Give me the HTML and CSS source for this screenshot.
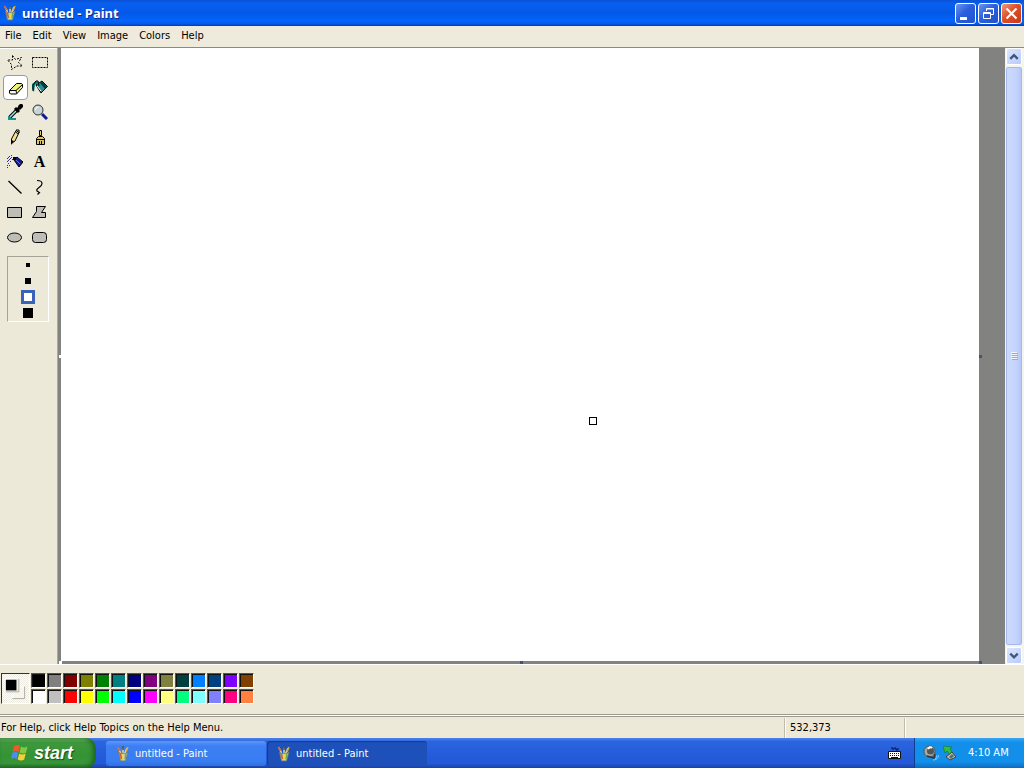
FILE: index.html
```html
<!DOCTYPE html>
<html lang="en">
<head>
<meta charset="utf-8">
<title>untitled - Paint</title>
<link rel="stylesheet" href="styles.css">
</head>
<body>
<svg class="defs" width="0" height="0" aria-hidden="true">
  <symbol id="paint" viewBox="0 0 16 16">
    <path d="M4 3l2 6M8 2v7M12 2l-3 7" stroke="#e8d8a0" stroke-width="1.500"/>
    <path d="M2.500 1l2 4" stroke="#c07050" stroke-width="2"/>
    <path d="M8 0v4" stroke="#405068" stroke-width="1.500"/>
    <path d="M13 1l-2 5" stroke="#e0a830" stroke-width="1.500"/>
    <path d="M3.500 6l2 9h5l2.500-9-3 2-2-1-2 1z" fill="#b4c8a4" stroke="#6c7c62" stroke-width=".8"/>
    <path d="M5 7l1.500 6" stroke="#d86030" stroke-width="1.500"/>
    <path d="M8.200 8v6" stroke="#e8d850" stroke-width="2"/>
    <path d="M11 8l-1 5" stroke="#58a850" stroke-width="1"/>
  </symbol>
</svg>
<header class="titlebar">
  <svg class="app-icon" aria-hidden="true"><use href="#paint"/></svg>
  <h1 class="title">untitled - Paint</h1>
  <div class="window-buttons">
    <button class="win-btn" aria-label="Minimize"><svg viewBox="0 0 19 19"><path d="M4 13h7v3H4z" fill="#fff"/></svg></button>
    <button class="win-btn" aria-label="Restore"><svg viewBox="0 0 19 19" fill="none" stroke="#fff"><path d="M7.500 7V4.500h7v6H12M7 5h8"/><path d="M4.500 8.500h7v6h-7zM4 9.500h8"/></svg></button>
    <button class="win-btn close" aria-label="Close"><svg viewBox="0 0 19 19"><path d="M4.500 4.500l10 10M14.500 4.500l-10 10" stroke="#fff" stroke-width="2.200"/></svg></button>
  </div>
</header>
<nav class="menubar">
  <button class="menu">File</button><button class="menu">Edit</button><button class="menu">View</button><button class="menu">Image</button><button class="menu">Colors</button><button class="menu">Help</button>
</nav>
<main class="workspace">
  <aside class="toolbox">
    <div class="tools">
      <button class="tool" aria-label="Free-form select"><svg viewBox="0 0 16 16"><path d="M5.500 1.500l3 4 6-2-3 5 4 3.500-5.500 0-5.500 3.500 0-5-4-4.500h5z" fill="none" stroke="#000" stroke-dasharray="2 1.300"/></svg></button>
      <button class="tool" aria-label="Select"><svg viewBox="0 0 16 16"><path d="M.5 3.500h15v10H.5z" fill="none" stroke="#000" stroke-dasharray="2 1"/></svg></button>
      <button class="tool selected" aria-label="Eraser" aria-pressed="true"><svg viewBox="0 0 16 16" stroke="#000"><path d="M1.500 10.500l7-7h5l1 1v3l-6 6.500h-6l-1-1z" fill="#eef080"/><path d="M1.500 10.500H8l6.500-6M8 10.500l.5 3" fill="none"/><path d="M2.500 11.500h5v1.500h-5z" fill="#fff" stroke="none"/></svg></button>
      <button class="tool" aria-label="Fill with color"><svg viewBox="0 0 16 16"><path d="M0 5l4-3 3 1-4 3-1 7-2-3z" fill="#087878"/><path d="M4 6l6-4 5.500 5.500L9 14z" fill="#28908e" stroke="#000"/><path d="M8 4l5 6 2-2-5-6z" fill="#083840"/><path d="M5 7l4 5" stroke="#fff" fill="none"/><path d="M1 12V6l3-4h2l1 5" stroke="#000" fill="none"/></svg></button>
      <button class="tool" aria-label="Pick color"><svg viewBox="0 0 16 16"><path d="M1 15h8M1 13h4" stroke="#169090" stroke-width="2"/><path d="M3 13l7-7" stroke="#000" stroke-width="3.500"/><path d="M3 13l6-6" stroke="#a5e5e2" stroke-width="1.500"/><path d="M8 4l4 4M10 6l3-3" stroke="#000" stroke-width="3"/><path d="M11 2l2-2h2l1 1v2l-3 3z"/></svg></button>
      <button class="tool" aria-label="Magnifier"><svg viewBox="0 0 16 16"><path d="M10 10l5 5" stroke="#15159a" stroke-width="3"/><circle cx="6" cy="6" r="5" fill="#c8d3d5" stroke="#333"/><path d="M3.500 6q0-3 3-3" stroke="#fff" fill="none"/></svg></button>
      <button class="tool" aria-label="Pencil"><svg viewBox="0 0 16 16"><path d="M4.500 14.500v-4.500l4.500-8.500 3 2-4 8.500z" fill="#f5dd91" stroke="#000"/><path d="M8.500 3l3 2M9 1h3v3" stroke="#000" fill="none"/><path d="M4 11l3 1-3 4z"/></svg></button>
      <button class="tool" aria-label="Brush"><svg viewBox="0 0 16 16"><path d="M7.500 1.500h2v5h-2z" fill="#e8d85a" stroke="#000"/><path d="M4.500 9.500l2-2h4l2 2v6h-8z" fill="#d8c668" stroke="#000"/><path d="M4 10.500h9M7.500 12v3M9.500 12v3" fill="none" stroke="#000"/></svg></button>
      <button class="tool" aria-label="Airbrush"><svg viewBox="0 0 16 16"><path d="M7 6l3-3 6 5-4 5z" fill="#101a9a" stroke="#000"/><path d="M6 3h3v3H6z"/><path d="M0 4h1v1H0zM2 2h1v1H2zM4 3h1v1H4zM2 5h1v1H2zM0 7h1v1H0zM4 1h1v1H4zM1 9h1v1H1zM3 7h1v1H3zM0 11h1v1H0zM2 11h1v1H2zM0 13h1v1H0zM5 5h1v1H5zM1 3h1v1H1zM3 4h1v1H3zM1 6h1v1H1z" fill="#2828bd"/><path d="M9 6l4 4" stroke="#7070dc"/></svg></button>
      <button class="tool letter" aria-label="Text">A</button>
      <button class="tool" aria-label="Line"><svg viewBox="0 0 16 16"><path d="M1.500 2l13 12.500" stroke="#000" stroke-width="1.300"/></svg></button>
      <button class="tool" aria-label="Curve"><svg viewBox="0 0 16 16"><path d="M5 1.500q5 0 5 3 0 2-3 4-3 2-2 3.500l2.500 1.500-2 2" fill="none" stroke="#000" stroke-width="1.200"/></svg></button>
      <button class="tool" aria-label="Rectangle"><svg viewBox="0 0 16 16"><path d="M.5 3.500h14v10H.5z" fill="#bebdb8" stroke="#000"/></svg></button>
      <button class="tool" aria-label="Polygon"><svg viewBox="0 0 16 16"><path d="M4.500 2.500h9l-4 6h4v5H.5l4-6z" fill="#bebdb8" stroke="#000"/></svg></button>
      <button class="tool" aria-label="Ellipse"><svg viewBox="0 0 16 16"><ellipse cx="7.500" cy="8.500" rx="7" ry="4.500" fill="#bebdb8" stroke="#000"/></svg></button>
      <button class="tool" aria-label="Rounded rectangle"><svg viewBox="0 0 16 16"><rect x=".5" y="3.500" width="14" height="10" rx="3" fill="#bebdb8" stroke="#000"/></svg></button>
    </div>
    <div class="sizes">
      <button class="size" aria-label="4 pixels"><svg viewBox="0 0 14 14"><path d="M5 5h4v4H5z"/></svg></button>
      <button class="size" aria-label="6 pixels"><svg viewBox="0 0 14 14"><path d="M4 4h6v6H4z"/></svg></button>
      <button class="size picked" aria-label="8 pixels" aria-pressed="true"><svg viewBox="0 0 14 14"><path d="M3 3h8v8H3z" fill="#fff"/></svg></button>
      <button class="size" aria-label="10 pixels"><svg viewBox="0 0 14 14"><path d="M2 2h10v10H2z"/></svg></button>
    </div>
  </aside>
  <section class="view">
    <div class="canvas">
      <span class="handle left"></span><span class="handle right"></span><span class="handle bottom"></span><span class="handle corner"></span><span class="handle start-corner"></span>
      <span class="eraser-cursor"></span>
    </div>
  </section>
  <div class="scrollbar">
    <button class="arrow" aria-label="Scroll up"><svg viewBox="0 0 15 15"><path d="M3.500 10l4-4 4 4" fill="none" stroke="#40567c" stroke-width="2.500"/></svg></button>
    <button class="thumb" aria-label="Scroll position"><svg viewBox="0 0 7 8"><path d="M0 .5h6M0 2.500h6M0 4.500h6M0 6.500h6" stroke="#f0f5ff"/><path d="M1 1.500h6M1 3.500h6M1 5.500h6M1 7.500h6" stroke="#93a9e3"/></svg></button>
    <button class="arrow" aria-label="Scroll down"><svg viewBox="0 0 15 15"><path d="M3.500 5.500l4 4 4-4" fill="none" stroke="#40567c" stroke-width="2.500"/></svg></button>
  </div>
</main>
<section class="palette">
  <div class="current"><svg viewBox="0 0 28 30"><path d="M11.500 13.500h12v12h-12z" fill="#f6f4ee" stroke="#fff"/><path d="M11 25.500h12.500V13" fill="none" stroke="#aaa89b"/><path d="M3.500 4.500h14v14h-14z" fill="#eeece2" stroke="#fff"/><path d="M4 18.500h13.500V5" fill="none" stroke="#aaa89b"/><path d="M4 6h11v11H4z"/></svg></div>
  <div class="swatches">
    <button class="swatch c0" aria-label="Black"></button><button class="swatch c1" aria-label="Gray"></button><button class="swatch c2" aria-label="Maroon"></button><button class="swatch c3" aria-label="Olive"></button><button class="swatch c4" aria-label="Green"></button><button class="swatch c5" aria-label="Teal"></button><button class="swatch c6" aria-label="Navy"></button><button class="swatch c7" aria-label="Purple"></button><button class="swatch c8" aria-label="Moss"></button><button class="swatch c9" aria-label="Dark teal"></button><button class="swatch c10" aria-label="Azure"></button><button class="swatch c11" aria-label="Dark blue"></button><button class="swatch c12" aria-label="Violet"></button><button class="swatch c13" aria-label="Brown"></button>
    <button class="swatch d0" aria-label="White"></button><button class="swatch d1" aria-label="Silver"></button><button class="swatch d2" aria-label="Red"></button><button class="swatch d3" aria-label="Yellow"></button><button class="swatch d4" aria-label="Lime"></button><button class="swatch d5" aria-label="Cyan"></button><button class="swatch d6" aria-label="Blue"></button><button class="swatch d7" aria-label="Magenta"></button><button class="swatch d8" aria-label="Pale yellow"></button><button class="swatch d9" aria-label="Spring green"></button><button class="swatch d10" aria-label="Pale cyan"></button><button class="swatch d11" aria-label="Periwinkle"></button><button class="swatch d12" aria-label="Rose"></button><button class="swatch d13" aria-label="Coral"></button>
  </div>
</section>
<footer class="status">
  <span class="help">For Help, click Help Topics on the Help Menu.</span>
  <span class="cell">532,373</span>
  <span class="cell"></span>
</footer>
<div class="taskbar">
  <button class="start"><svg viewBox="0 0 18 18" aria-hidden="true"><path d="M3 2q3-2 6 0L7.500 8q-3-2-6 0z" fill="#ee5a2a"/><path d="M10 2.500q3 2 6.500 0L15 8.500q-3 2-6.500 0z" fill="#82c943"/><path d="M1.200 9q3-2 6 0l-1.500 6q-3-2-5.500 0z" fill="#4c8df0"/><path d="M8.200 9.500q3 2 6.500 0l-1.500 6q-3 2-6.500 0z" fill="#f8cf37"/></svg><span>start</span></button>
  <div class="tasks">
    <button class="task"><svg class="app-icon" aria-hidden="true"><use href="#paint"/></svg><span>untitled - Paint</span></button>
    <button class="task active"><svg class="app-icon" aria-hidden="true"><use href="#paint"/></svg><span>untitled - Paint</span></button>
  </div>
  <button class="keyboard" aria-label="Keyboard"><svg viewBox="0 0 13 13"><path d="M4 0v2h2V1h2v2h2V1" fill="none" stroke="#0a1240"/><path d="M.5 4.500h12v7H.5z" fill="#fff" stroke="#111"/><path d="M2 6.500h9M2 8.500h9" stroke="#111" stroke-dasharray="1 1"/><path d="M3 10.500h7" stroke="#111"/></svg></button>
  <div class="tray">
    <svg viewBox="0 0 16 16" aria-hidden="true"><circle cx="6.500" cy="6.500" r="5.500" fill="#a9a9a2" stroke="#50555a"/><circle cx="7.500" cy="6" r="3.500" fill="#555"/><path d="M5 4q2-3 4-1" stroke="#fff" stroke-width="2" fill="none"/><path d="M4 11l7 2 1-4" stroke="#333" fill="none" stroke-width="1.500"/><path d="M12 14q2-1 2-4M10 15q5 0 6-5" stroke="#80c8ff" fill="none"/></svg>
    <svg viewBox="0 0 16 16" aria-hidden="true"><path d="M3 12l6-5 4 5-6 3z" fill="#b7bdb8" stroke="#3b4544"/><path d="M6 12l3-3 2 2-3 3z" fill="#5d6b70"/><path d="M0 1l9 1-2 2 2 3-3 2-2-3-2 2z" fill="#35bd3c" stroke="#14702e" stroke-width=".6"/></svg>
    <time class="clock">4:10 AM</time>
  </div>
</div>
</body>
</html>
```
FILE: styles.css
```css
* { box-sizing: border-box; }
body {
  margin: 0;
  height: 100vh;
  display: flex;
  flex-direction: column;
  overflow: hidden;
  background: #ece9d8;
  color: #000;
  font: 11px/14px "DejaVu Sans Condensed", "Noto Sans", sans-serif;
}
button { margin: 0; padding: 0; border: 0; background: none; color: inherit; font: inherit; }
svg { display: block; }
.defs { position: absolute; }
.app-icon { width: 16px; height: 16px; flex: none; }

.titlebar {
  flex: none;
  height: 26px;
  display: flex;
  align-items: center;
  gap: 4px;
  padding: 0 2px;
  background: linear-gradient(#0a52d8, #0860f0 15%, #0458e6 50%, #0364fb 80%, #0359ea 92%, #0139b0);
}
.title { flex: 1; margin: 0; color: #fff; font: bold 13px/16px "Noto Sans", sans-serif; text-shadow: 1px 1px #0b2e8f; }
.window-buttons { display: flex; gap: 2px; }
.win-btn { width: 21px; height: 21px; border: 1px solid #fff; border-radius: 3px; background: linear-gradient(135deg, #6b94f0, #2c5fdd 45%, #2152cf); }
.win-btn.close { background: linear-gradient(135deg, #f09a7c, #dd4e29 45%, #c83a18); }

.menubar { flex: none; height: 21px; display: flex; align-items: center; gap: 11px; padding: 0 5px 2px; background: #eeebdc; }

.workspace { flex: 1; min-height: 0; display: flex; border-top: 1px solid #8c8a80; }
.toolbox { flex: none; width: 57px; padding: 1px 0 0 3px; border-top: 1px solid #fff; }
.tools { display: grid; grid-template-columns: 25px 25px; grid-auto-rows: 25px; }
.tool { display: flex; align-items: center; justify-content: center; padding: 0 2px 1px 0; }
.tool svg { width: 16px; height: 16px; }
.tool.selected { padding: 0; border: 1px solid #8e9cae; border-radius: 4px; background: #fff; }
.tool.letter { font: bold 16px/20px "Liberation Serif", serif; }
.sizes { width: 42px; margin: 6px 0 0 4px; padding: 1px 0; display: flex; flex-direction: column; align-items: center; gap: 2px; border: 1px solid; border-color: #a5a398 #fff #fff #a5a398; }
.size, .size svg { width: 14px; height: 14px; }
.size.picked { background: #3a62bb; }

.view { flex: 1; display: flex; padding: 0 26px 3px 3px; background: #828280; border-left: 1px solid #aaa89c; }
.canvas { flex: 1; position: relative; background: #fff; }
.handle { position: absolute; width: 3px; height: 3px; background: #3f5478; }
.handle.left { left: -2px; top: 50%; background: #fff; }
.handle.right { right: -3px; top: 50%; }
.handle.bottom { left: 50%; bottom: -3px; }
.handle.corner { right: -3px; bottom: -3px; }
.handle.start-corner { left: -2px; bottom: -3px; background: #fff; }
.eraser-cursor { position: absolute; left: 528px; top: 369px; width: 8px; height: 8px; border: 1px solid #000; background: #fff; }

.scrollbar { flex: none; width: 19px; padding: 0 2px 0 1px; display: flex; flex-direction: column; gap: 2px; background: #f5f4ef; }
.arrow { height: 17px; border: 1px solid #fff; border-radius: 2px; background: linear-gradient(135deg, #dce6ff, #b7cbfb); }
.arrow svg { width: 14px; height: 15px; }
.thumb { flex: 1; display: flex; align-items: center; justify-content: center; border: 1px solid #a3b9ed; border-radius: 2px; background: linear-gradient(90deg, #cbdafe, #c4d4fd 60%, #b5c8f7); }
.thumb svg { width: 7px; height: 8px; }

.palette { flex: none; height: 50px; display: flex; gap: 1px; padding: 8px 0 0 1px; border-top: 1px solid #fff; }
.current { width: 29px; height: 31px; border: 1px solid; border-color: #333 #fff #fff #333; background: repeating-conic-gradient(#fff 0 25%, #ece9e0 0 50%) 0 0 / 2px 2px; }
.swatches { display: grid; grid-template-columns: repeat(14, 16px); grid-auto-rows: 16px; }
.swatch { width: 15px; height: 15px; border: 1px solid; border-color: #555 #fff #fff #555; box-shadow: inset 1px 1px #111; }
.c0 { background: #000; } .c1 { background: #808080; } .c2 { background: #800000; } .c3 { background: #808000; }
.c4 { background: #008000; } .c5 { background: #008080; } .c6 { background: #000080; } .c7 { background: #800080; }
.c8 { background: #808040; } .c9 { background: #004040; } .c10 { background: #0080ff; } .c11 { background: #004080; }
.c12 { background: #8000ff; } .c13 { background: #804000; }
.d0 { background: #fff; } .d1 { background: #c0c0c0; } .d2 { background: #f00; } .d3 { background: #ff0; }
.d4 { background: #0f0; } .d5 { background: #0ff; } .d6 { background: #00f; } .d7 { background: #f0f; }
.d8 { background: #ffff80; } .d9 { background: #00ff80; } .d10 { background: #80ffff; } .d11 { background: #8080ff; }
.d12 { background: #ff0080; } .d13 { background: #ff8040; }

.status { flex: none; height: 24px; display: flex; align-items: stretch; padding-top: 2px; border-top: 1px solid #9c9a8e; box-shadow: inset 0 1px #fff, inset 0 2px #9c9a8e; line-height: 20px; }
.help { flex: 1; padding: 1px 1px 0; }
.cell { width: 120px; margin: 1px 0 0; padding: 0 5px; border-left: 1px solid #bfbcab; box-shadow: inset 1px 0 #fff; }

.taskbar { flex: none; height: 30px; display: flex; color: #fff; background: linear-gradient(#4a83ea, #2c63de 12%, #245bda 60%, #2359d6 85%, #1941a5); }
.start { width: 96px; display: flex; align-items: center; gap: 5px; padding: 0 0 1px 11px; border-radius: 0 10px 10px 0; background: linear-gradient(#74b86f, #3d983c 15%, #359334 60%, #37963a 85%, #246b25); box-shadow: inset -3px 0 5px #1c641f; font: italic bold 18px/24px "Liberation Sans", sans-serif; text-shadow: 1px 1px 1px #1c4a1b; }
.start svg { width: 18px; height: 18px; }
.tasks { flex: 1; display: flex; gap: 1px; padding: 3px 0 2px 10px; }
.task { width: 160px; display: flex; align-items: center; gap: 4px; padding: 0 9px; border-radius: 3px; background: linear-gradient(#5c97fa, #3c7ff2 20%, #397df3 80%, #3170df); }
.task.active { background: #1d50b8; box-shadow: inset 1px 1px 1px #143b8f; }
.keyboard { width: 13px; margin-right: 13px; }
.keyboard svg { width: 13px; height: 13px; }
.tray { width: 110px; display: flex; align-items: center; gap: 4px; padding-left: 8px; border-left: 1px solid #0c408e; background: linear-gradient(#3aa5f4, #128fea 15%, #128fe9 80%, #0f69be); }
.tray svg { width: 16px; height: 16px; }
.clock { margin-left: 5px; }
```
